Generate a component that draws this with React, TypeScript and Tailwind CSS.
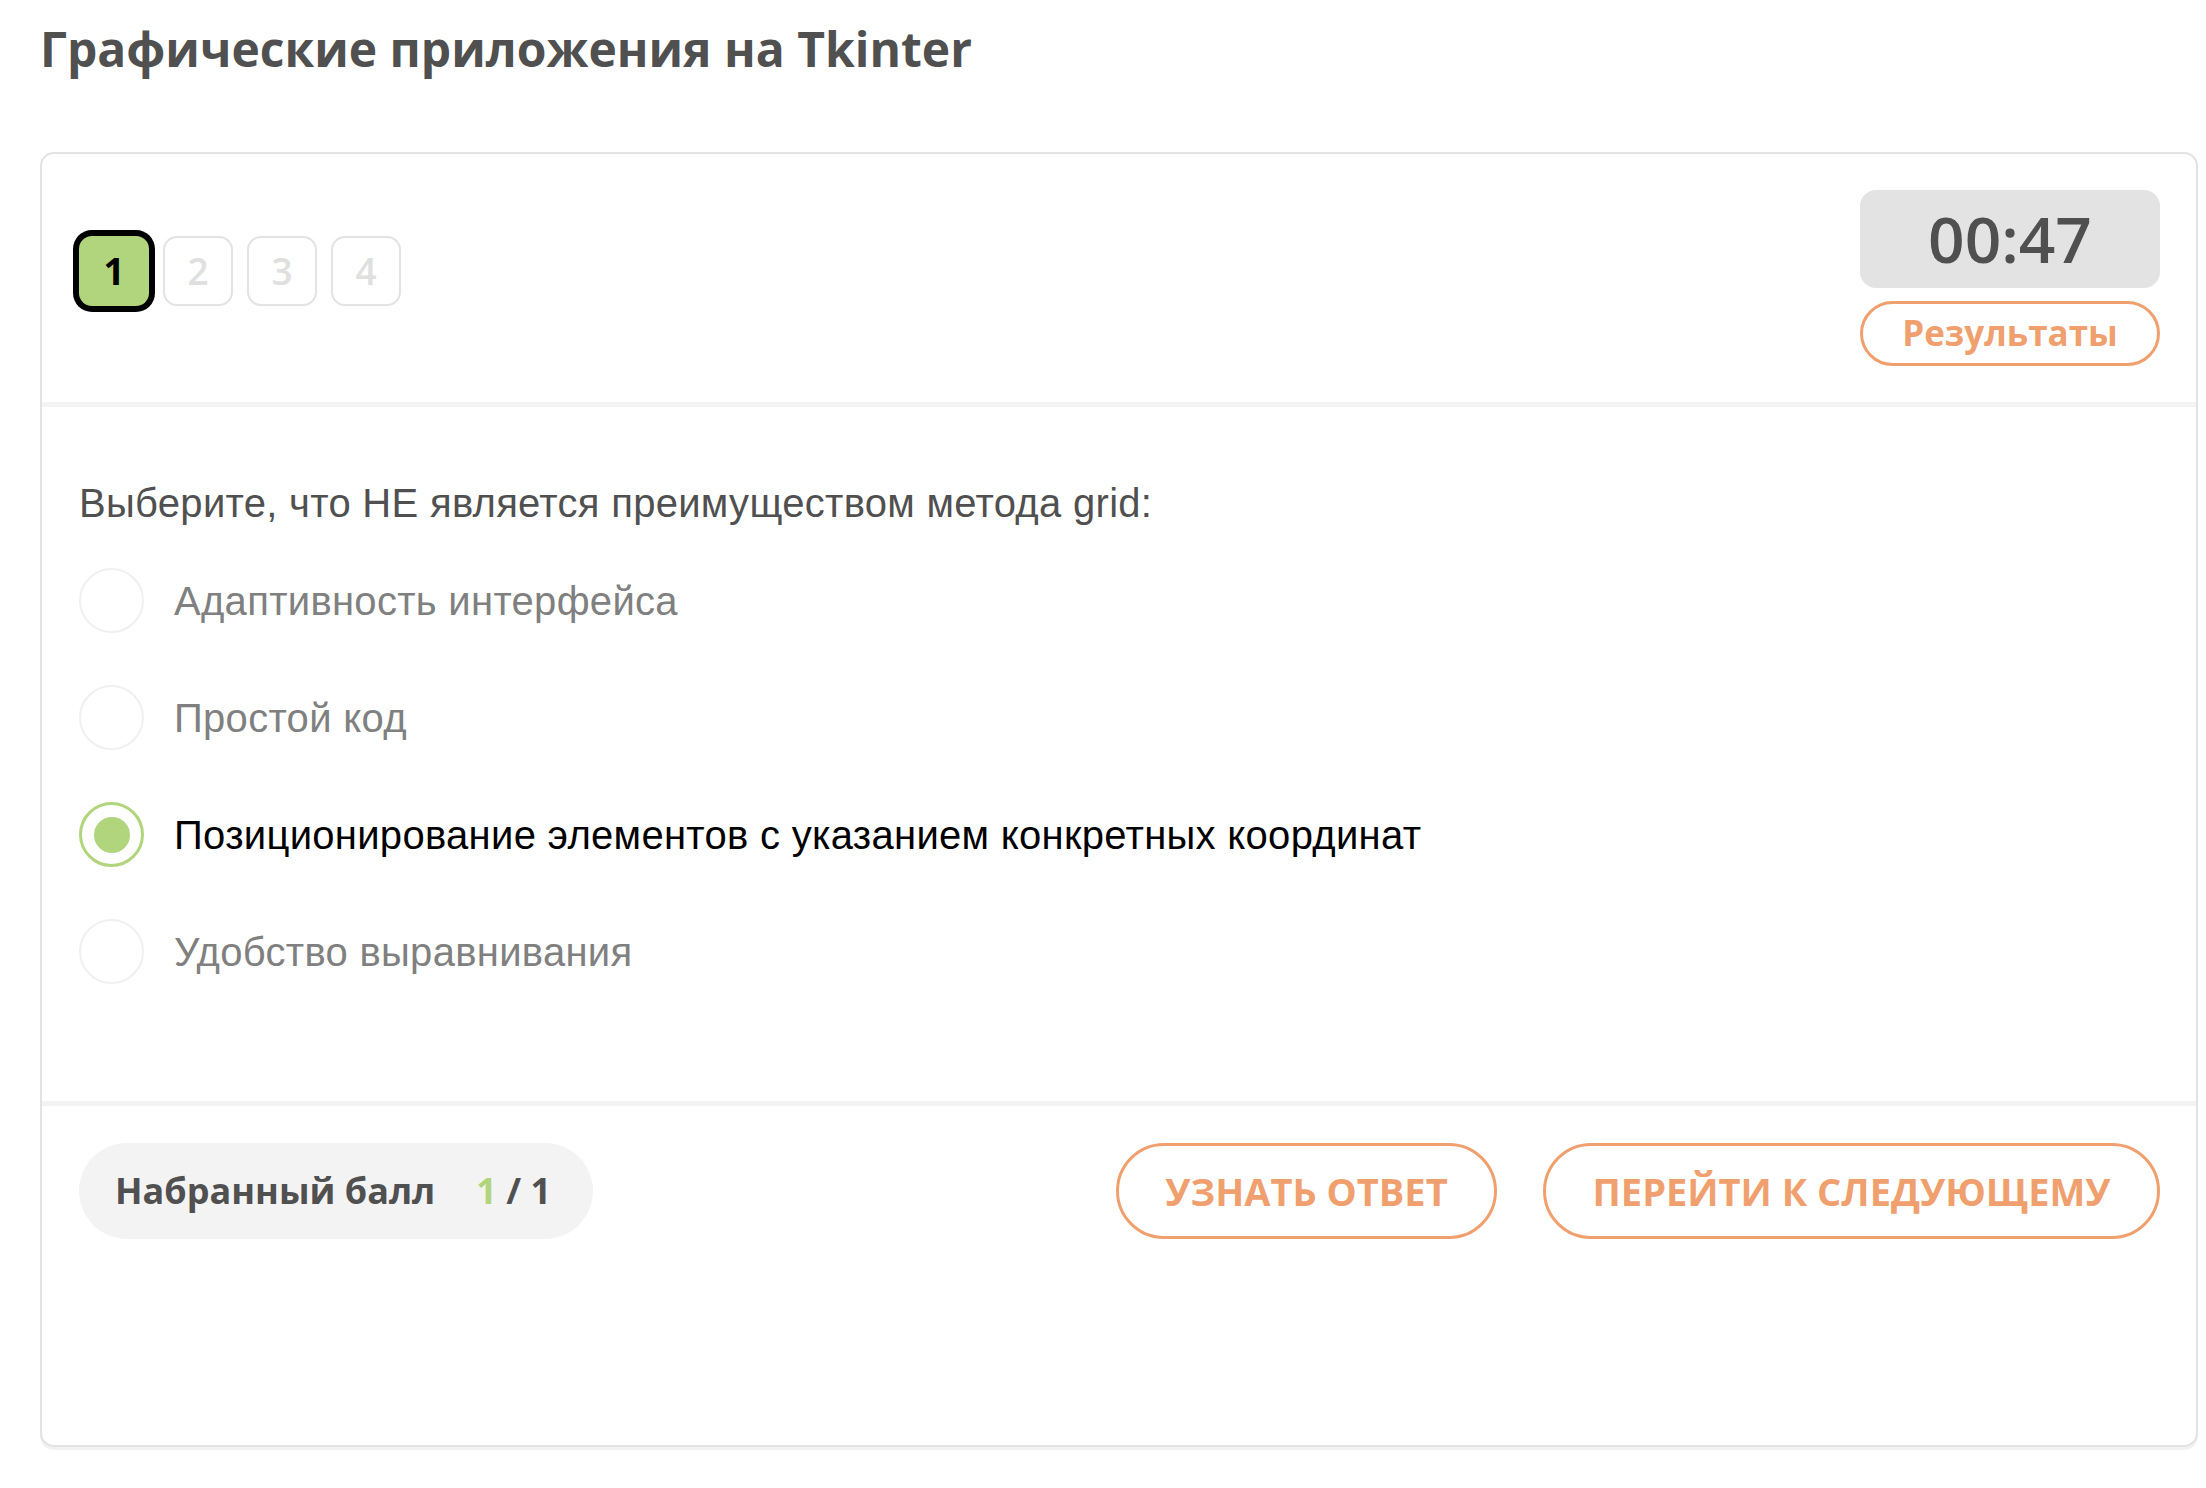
const steps = [1, 2, 3, 4];

const options = [
  { id: 1, text: "Адаптивность интерфейса", checked: false },
  { id: 2, text: "Простой код", checked: false },
  { id: 3, text: "Позиционирование элементов с указанием конкретных координат", checked: true },
  { id: 4, text: "Удобство выравнивания", checked: false },
];

const sans = "font-['Open_Sans','Noto_Sans',sans-serif]";
const helv = "font-['Liberation_Sans',Arial,sans-serif]";

export default function App() {
  return (
    <div className="min-h-screen bg-white pl-[40px] pr-[8px] pt-[25px]">
      {/* Page title */}
      <h1 className={`${sans} text-[48px] font-bold leading-[48px] text-[#505050]`}>
        Графические приложения на Tkinter
      </h1>

      {/* Quiz card */}
      <div className="mt-[79px] rounded-[14px] border-2 border-[#e3e3e3] bg-white shadow-[0_3px_0_0_#f2f2f2]">
        {/* Header: steps + timer */}
        <div className="flex items-start justify-between pt-[36px] pb-[36px] pl-[37px] pr-[36px]">
          <div className="mt-[46px] flex gap-[14px]">
            {steps.map((n) =>
              n === 1 ? (
                <div
                  key={n}
                  className={`${sans} flex h-[70px] w-[70px] items-center justify-center rounded-[13px] bg-[#b0d57c] text-[37px] font-bold text-black ring-[6px] ring-black`}
                >
                  {n}
                </div>
              ) : (
                <div
                  key={n}
                  className={`${sans} flex h-[70px] w-[70px] items-center justify-center rounded-[14px] border-2 border-[#e3e3e3] text-[37px] font-semibold text-[#e0e0e0]`}
                >
                  {n}
                </div>
              )
            )}
          </div>

          <div className="flex w-[300px] flex-col">
            <div
              className={`${sans} flex h-[98px] items-center justify-center rounded-[16px] bg-[#e3e3e3] text-[64px] font-semibold text-[#505050]`}
            >
              00:47
            </div>
            <button
              className={`${sans} mt-[13px] flex h-[65px] items-center justify-center rounded-full border-[3px] border-[#f0a06e] text-[35px] font-bold text-[#f0a06e]`}
            >
              Результаты
            </button>
          </div>
        </div>

        <div className="h-[5px] bg-[#f3f3f3]" />

        {/* Question */}
        <div className="px-[37px] pt-[73px] pb-[117px]">
          <p className={`${helv} text-[40px] leading-[46px] tracking-[0.3px] text-[#505050]`}>
            Выберите, что НЕ является преимуществом метода grid:
          </p>
          <div className="mt-[42px] flex flex-col gap-[52px]">
            {options.map((o) => (
              <label key={o.id} className="flex h-[65px] items-center gap-[30px]">
                {o.checked ? (
                  <span className="flex h-[65px] w-[65px] shrink-0 items-center justify-center rounded-full border-[3px] border-[#b0d57c]">
                    <span className="h-[36px] w-[36px] rounded-full bg-[#b0d57c]" />
                  </span>
                ) : (
                  <span className="h-[65px] w-[65px] shrink-0 rounded-full border-2 border-[#f0f0f0]" />
                )}
                <span
                  className={`${helv} text-[40px] leading-[46px] tracking-[0.3px] ${
                    o.checked ? "text-black" : "text-[#808080]"
                  }`}
                >
                  {o.text}
                </span>
              </label>
            ))}
          </div>
        </div>

        <div className="h-[5px] bg-[#f3f3f3]" />

        {/* Footer */}
        <div className="flex items-center px-[37px] pr-[36px] pt-[37px] pb-[206px]">
          <div
            className={`${sans} flex h-[96px] items-center rounded-full bg-[#f3f3f3] pl-[36px] pr-[42px] text-[36px] font-bold text-[#505050]`}
          >
            <span>Набранный балл</span>
            <span className="ml-[41px]">
              <span className="text-[#b0d57c]">1</span> / 1
            </span>
          </div>

          <div className="ml-auto flex gap-[46px]">
            <button
              className={`${sans} flex h-[96px] w-[381px] items-center justify-center rounded-full border-[3px] border-[#f0a06e] text-[38px] font-bold text-[#f0a06e]`}
            >
              УЗНАТЬ ОТВЕТ
            </button>
            <button
              className={`${sans} flex h-[96px] w-[617px] items-center justify-center rounded-full border-[3px] border-[#f0a06e] text-[38px] font-bold text-[#f0a06e]`}
            >
              ПЕРЕЙТИ К СЛЕДУЮЩЕМУ
            </button>
          </div>
        </div>
      </div>
    </div>
  );
}
